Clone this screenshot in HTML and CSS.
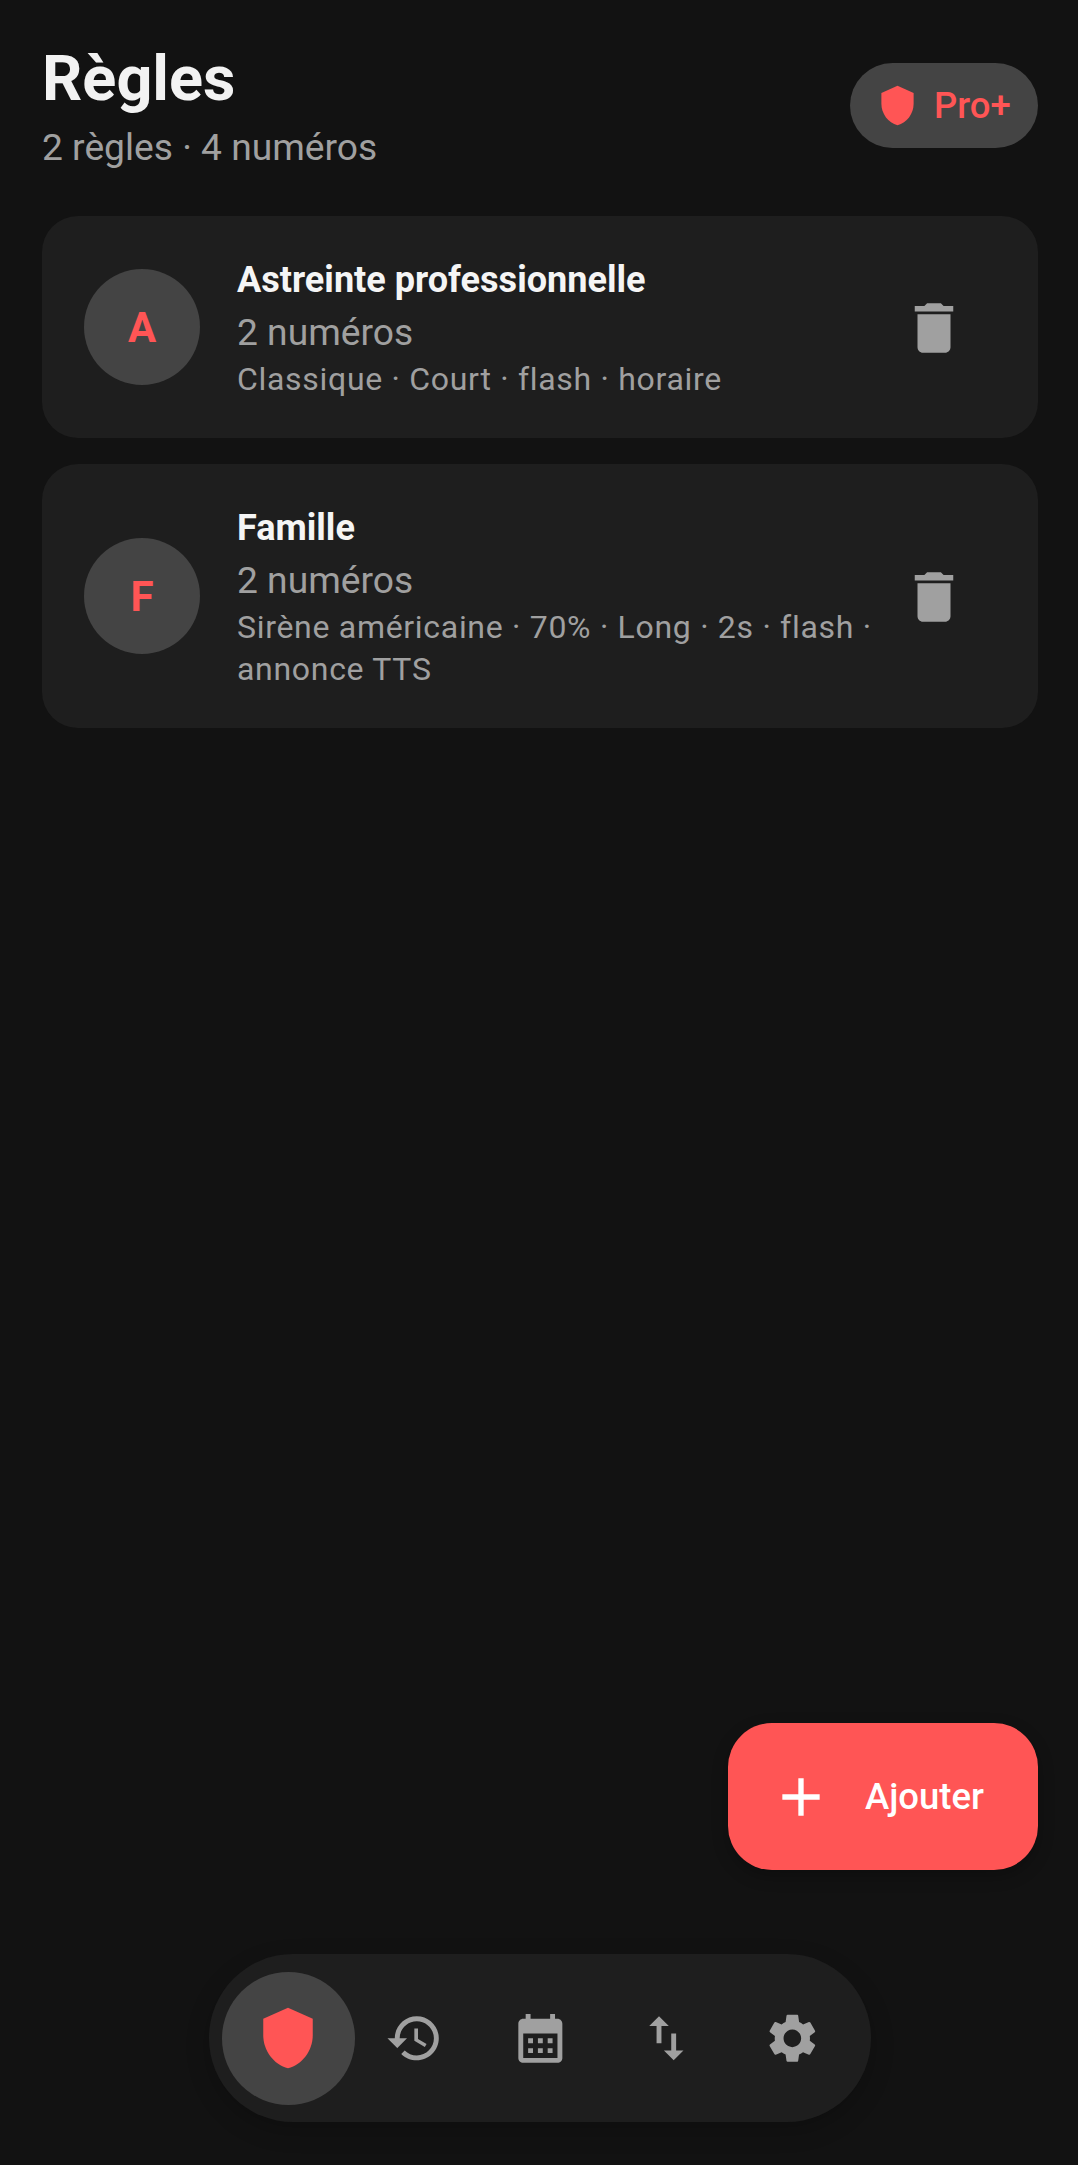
FILE: index.html
```html
<!DOCTYPE html>
<html lang="fr">
<head>
<meta charset="utf-8">
<title>Règles</title>
<link rel="stylesheet" href="styles.css">
</head>
<body>
<main class="screen">
  <header class="top">
    <div class="heading">
      <h1 class="title">Règles</h1>
      <p class="subtitle">2 règles · 4 numéros</p>
    </div>
    <div class="pro">
      <svg class="pro-icon" viewBox="0 0 24 24"><path d="M12 1L3 5v6c0 5.55 3.84 10.74 9 12 5.16-1.26 9-6.45 9-12V5l-9-4z"/></svg>
      <span>Pro+</span>
    </div>
  </header>
  <section class="list">
    <article class="card">
      <div class="avatar">A</div>
      <div class="info">
        <h2 class="name">Astreinte professionnelle</h2>
        <p class="count">2 numéros</p>
        <p class="meta">Classique · Court · flash · horaire</p>
      </div>
      <svg class="trash" viewBox="0 0 24 24"><path d="M6 19c0 1.1.9 2 2 2h8c1.1 0 2-.9 2-2V7H6v12zM19 4h-3.5l-1-1h-5l-1 1H5v2h14V4z"/></svg>
    </article>
    <article class="card">
      <div class="avatar">F</div>
      <div class="info">
        <h2 class="name">Famille</h2>
        <p class="count">2 numéros</p>
        <p class="meta">Sirène américaine · 70% · Long · 2s · flash · annonce TTS</p>
      </div>
      <svg class="trash" viewBox="0 0 24 24"><path d="M6 19c0 1.1.9 2 2 2h8c1.1 0 2-.9 2-2V7H6v12zM19 4h-3.5l-1-1h-5l-1 1H5v2h14V4z"/></svg>
    </article>
  </section>
  <button class="fab">
    <svg class="fab-icon" viewBox="0 0 24 24"><path d="M19 13h-6v6h-2v-6H5v-2h6V5h2v6h6v2z"/></svg>
    <span>Ajouter</span>
  </button>
  <nav class="nav">
    <div class="nav-item active">
      <svg class="nav-shield" viewBox="0 0 24 24"><path d="M12 1L3 5v6c0 5.55 3.84 10.74 9 12 5.16-1.26 9-6.45 9-12V5l-9-4z"/></svg>
    </div>
    <div class="nav-item">
      <svg class="nav-icon" viewBox="0 0 24 24"><path d="M13 3c-4.97 0-9 4.03-9 9H1l3.89 3.89.07.14L9 12H6c0-3.87 3.13-7 7-7s7 3.13 7 7-3.13 7-7 7c-1.93 0-3.68-.79-4.94-2.06l-1.42 1.42C8.27 19.99 10.51 21 13 21c4.97 0 9-4.03 9-9s-4.03-9-9-9zm-1 5v5l4.28 2.54.72-1.21-3.5-2.08V8H12z"/></svg>
    </div>
    <div class="nav-item">
      <svg class="nav-icon" viewBox="0 0 24 24"><path d="M19 4h-1V2h-2v2H8V2H6v2H5c-1.1 0-2 .9-2 2v14c0 1.1.9 2 2 2h14c1.1 0 2-.9 2-2V6c0-1.1-.9-2-2-2zm0 16H5V10h14v10zM9 14H7v-2h2v2zm4 0h-2v-2h2v2zm4 0h-2v-2h2v2zm-8 4H7v-2h2v2zm4 0h-2v-2h2v2zm4 0h-2v-2h2v2z"/></svg>
    </div>
    <div class="nav-item">
      <svg class="nav-icon" viewBox="0 0 24 24"><path d="M16 17.01V10h-2v7.01h-3L15 21l4-3.99h-3zM9 3L5 6.99h3V14h2V6.99h3L9 3z"/></svg>
    </div>
    <div class="nav-item">
      <svg class="nav-icon" viewBox="0 0 24 24"><path d="M19.14 12.94c.04-.3.06-.61.06-.94 0-.32-.02-.64-.07-.94l2.03-1.58c.18-.14.23-.41.12-.61l-1.92-3.32c-.12-.22-.37-.29-.59-.22l-2.39.96c-.5-.38-1.03-.7-1.62-.94l-.36-2.54c-.04-.24-.24-.41-.48-.41h-3.84c-.24 0-.43.17-.47.41l-.36 2.54c-.59.24-1.13.57-1.62.94l-2.39-.96c-.22-.08-.47 0-.59.22L2.74 8.87c-.12.21-.08.47.12.61l2.03 1.58c-.05.3-.09.63-.09.94s.02.64.07.94l-2.03 1.58c-.18.14-.23.41-.12.61l1.92 3.32c.12.22.37.29.59.22l2.39-.96c.5.38 1.03.7 1.62.94l.36 2.54c.05.24.24.41.48.41h3.84c.24 0 .44-.17.47-.41l.36-2.54c.59-.24 1.13-.56 1.62-.94l2.39.96c.22.08.47 0 .59-.22l1.92-3.32c.12-.22.07-.47-.12-.61l-2.01-1.58zM12 15.6c-1.98 0-3.6-1.62-3.6-3.6s1.62-3.6 3.6-3.6 3.6 1.62 3.6 3.6-1.62 3.6-3.6 3.6z"/></svg>
    </div>
  </nav>
</main>
</body>
</html>
```
FILE: styles.css
```css
* { box-sizing: border-box; }
html, body { margin: 0; padding: 0; background: #121212; }
body { font-family: Roboto, "Noto Sans", sans-serif; }
.screen {
  position: relative;
  width: 1078px;
  height: 2165px;
  padding: 42px 40px 0 42px;
  overflow: hidden;
}
.top {
  display: flex;
  justify-content: space-between;
  align-items: flex-start;
  height: 174px;
}
.title {
  margin: 0;
  font-size: 63px;
  font-weight: 700;
  line-height: 74px;
  color: #f2f2f2;
}
.subtitle {
  margin: 6px 0 0;
  font-size: 37.2px;
  line-height: 50px;
  color: #a0a0a0;
}
.pro {
  display: flex;
  align-items: center;
  gap: 15px;
  margin-top: 21px;
  width: 188px;
  height: 85px;
  padding-left: 26px;
  border-radius: 43px;
  background: #444444;
  color: #ff5555;
  font-size: 36.5px;
  font-weight: 500;
}
.pro-icon { width: 43px; height: 43px; fill: #ff5555; flex: none; }
.list { display: flex; flex-direction: column; gap: 26px; }
.card {
  display: flex;
  align-items: center;
  padding: 41.5px 71px 38px 42px;
  border-radius: 36px;
  background: #1e1e1e;
}
.avatar {
  flex: none;
  display: flex;
  align-items: center;
  justify-content: center;
  width: 116px;
  height: 116px;
  margin-top: -3px;
  margin-right: 38px;
  border-radius: 50%;
  background: #444444;
  color: #ff5555;
  font-size: 42px;
  font-weight: 700;
}
.info { flex: 1; min-width: 0; margin-left: -1px; }
.name {
  margin: 0;
  font-size: 36.1px;
  font-weight: 700;
  line-height: 44px;
  color: #f5f5f5;
}
.count {
  margin: 6.5px 0 0;
  font-size: 37.2px;
  line-height: 48px;
  color: #a0a0a0;
}
.meta {
  margin: 2px 0 0;
  font-size: 32px;
  line-height: 42px;
  letter-spacing: 0.7px;
  color: #a0a0a0;
}
.trash { flex: none; width: 66px; height: 66px; fill: #a0a0a0; margin-left: 10px; margin-top: -2px; }
.fab {
  position: absolute;
  top: 1723px;
  left: 728px;
  display: flex;
  align-items: center;
  gap: 32px;
  width: 310px;
  height: 147px;
  padding: 0 0 0 41px;
  border: 0;
  border-radius: 44px;
  background: #ff5555;
  color: #ffffff;
  font-family: inherit;
  font-size: 36.5px;
  font-weight: 500;
  box-shadow: 0 6px 16px rgba(0, 0, 0, 0.25);
}
.fab-icon { width: 64px; height: 64px; fill: #ffffff; flex: none; }
.nav {
  position: absolute;
  top: 1954px;
  left: 209px;
  display: flex;
  align-items: center;
  justify-content: center;
  width: 662px;
  height: 168px;
  border-radius: 84px;
  background: #1e1e1e;
  box-shadow: 0 8px 24px rgba(0, 0, 0, 0.2);
}
.nav-item {
  display: flex;
  align-items: center;
  justify-content: center;
  width: 126px;
  height: 133px;
  flex: none;
}
.nav-item.active {
  width: 133px;
  margin: 0 -3.5px;
  border-radius: 50%;
  background: #444444;
}
.nav-shield { width: 66px; height: 66px; fill: #ff5555; }
.nav-icon { width: 58.7px; height: 58.7px; fill: #a0a0a0; }
```
